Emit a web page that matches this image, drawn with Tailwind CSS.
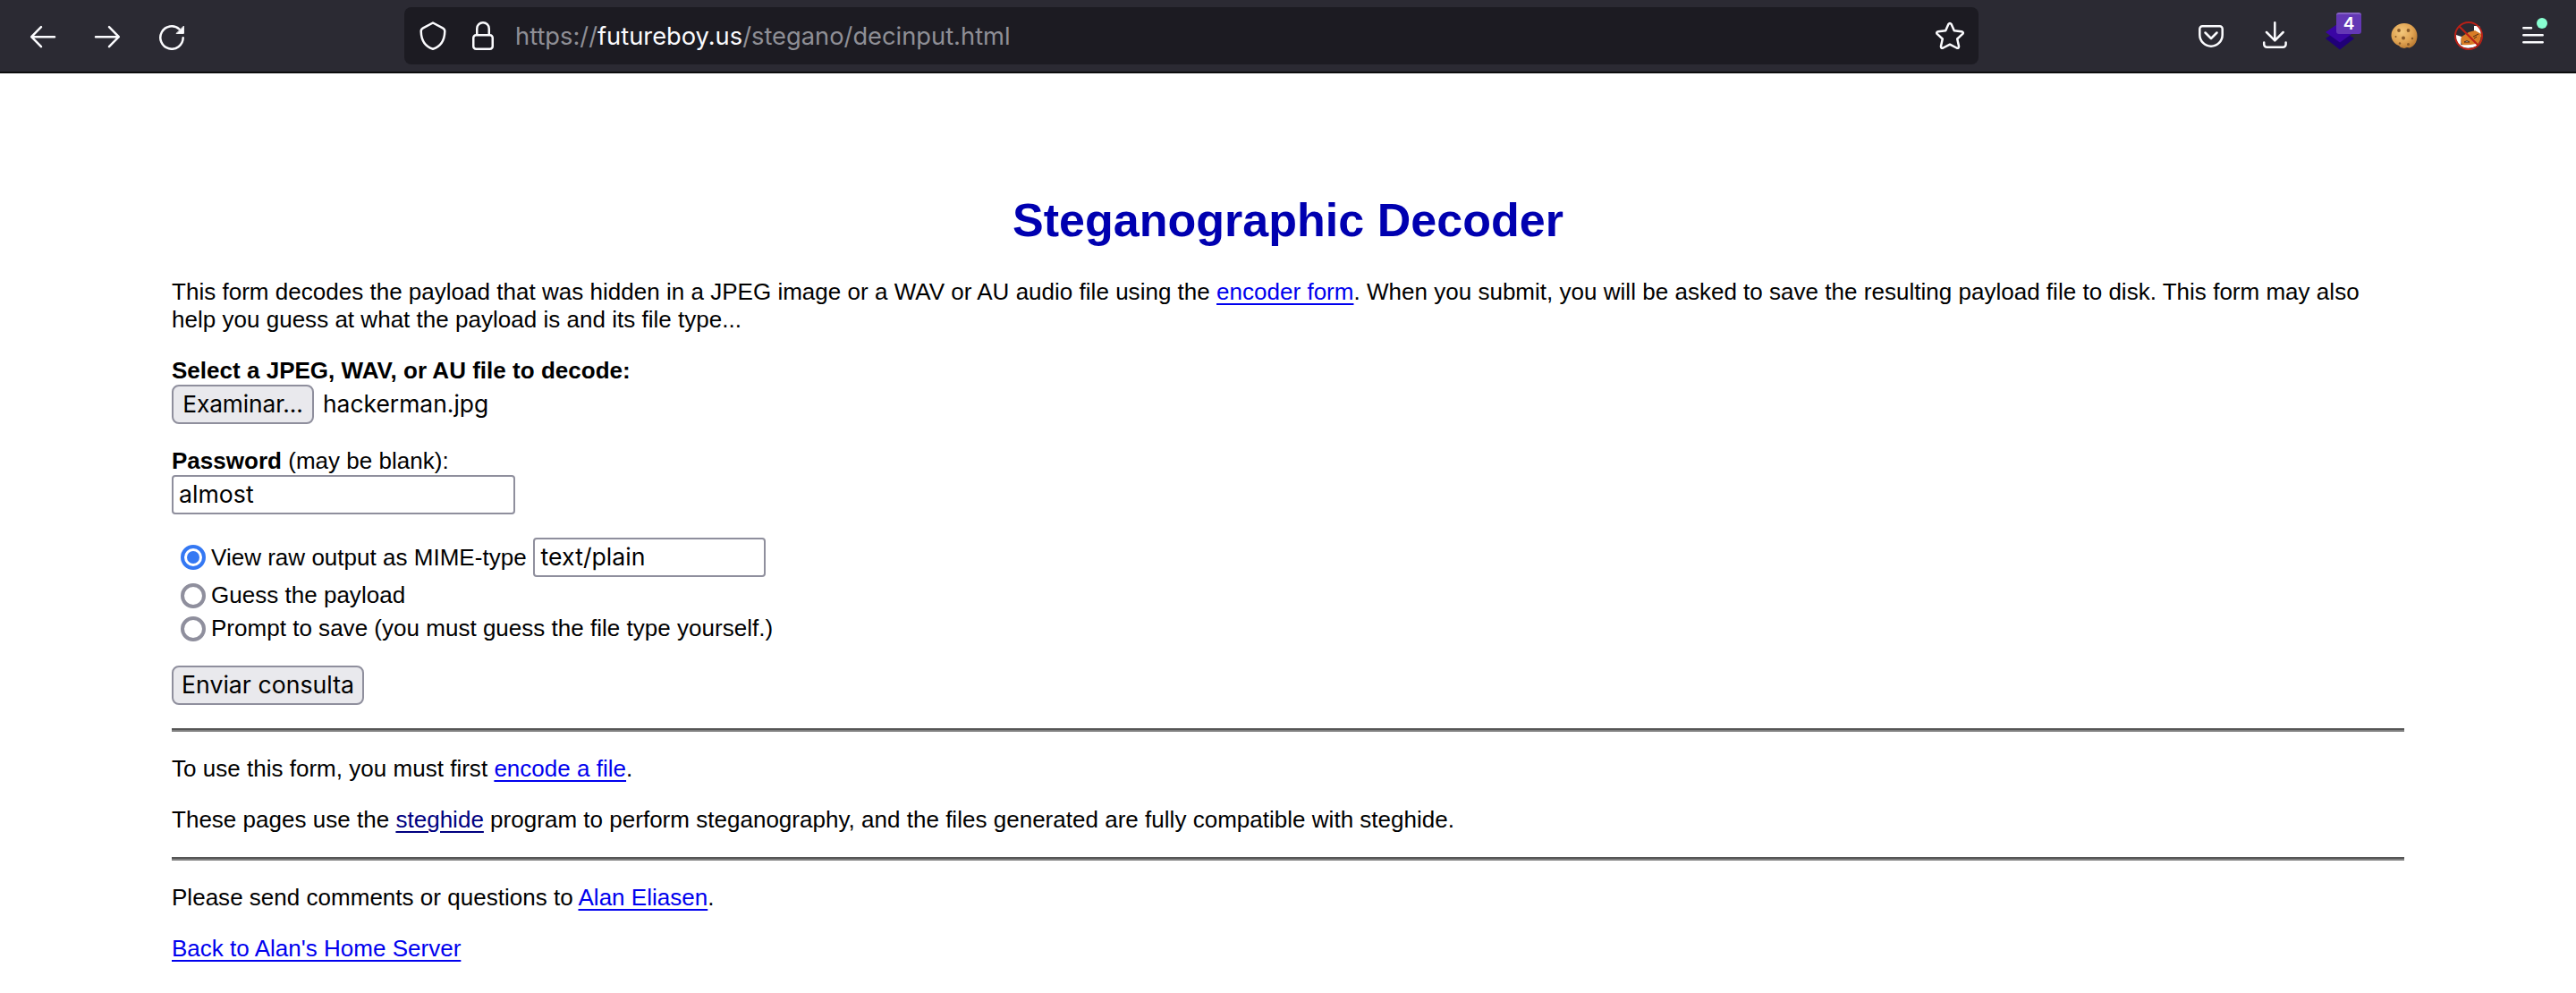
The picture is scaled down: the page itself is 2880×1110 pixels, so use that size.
<!DOCTYPE html>
<html lang="es">
<head>
<meta charset="utf-8">
<title>Steganographic Decoder</title>
<script src="https://cdn.jsdelivr.net/npm/@tailwindcss/browser@4"></script>
</head>
<body class="bg-white text-black">
<header class="flex h-[82px] items-start border-b-2 border-[#0c0c0d] bg-[#2b2a33] text-[#fbfbfe]">
  <nav class="flex h-20 w-[452px] items-center gap-10 pl-8">
    <svg class="size-8" viewBox="0 0 32 32" fill="none" stroke="currentColor" stroke-width="2.5" stroke-linecap="round" stroke-linejoin="round"><path d="M29 17.200H3.200M14 6.200L3.200 17.200L14 28.200"/></svg>
    <svg class="size-8" viewBox="0 0 32 32" fill="none" stroke="currentColor" stroke-width="2.5" stroke-linecap="round" stroke-linejoin="round"><path d="M3 17.200H28.800M18 6.200L28.800 17.200L18 28.200"/></svg>
    <svg class="size-8" viewBox="0 0 32 32" fill="none" stroke="currentColor" stroke-width="2.500" stroke-linecap="round"><path d="M28.700 18.300A12.700 12.700 0 1 1 24.500 8.600"/><path d="M29.400 5.500V13.400H21.500Z" fill="currentColor" stroke-width="1" stroke-linejoin="round"/></svg>
  </nav>
  <div class="mt-2 flex h-16 w-[1760px] items-center rounded-lg bg-[#1c1b22] px-4">
    <svg class="size-8" viewBox="0 0 32 32" fill="none" stroke="currentColor" stroke-width="2.500" stroke-linejoin="round"><path d="M16 1.500L27 7.300Q29.300 8.500 29.300 11C29 21 25 28 16 30.700C7 28 3 21 2.700 11Q2.700 8.500 5 7.300Z"/></svg>
    <svg class="ml-6 size-8" viewBox="0 0 32 32" fill="none" stroke="currentColor" stroke-width="2.500"><rect x="5.250" y="15.250" width="21.500" height="15.500" rx="3"/><path d="M9.250 15V8a6.750 6.750 0 0 1 13.500 0V15"/></svg>
    <div class="ml-5 pt-0.5 whitespace-nowrap font-['Inter',sans-serif] text-[27.3px] leading-8 text-[#8f8f96]">https://<span class="text-[#fbfbfe]">futureboy.us</span>/stegano/decinput.html</div>
    <svg class="ml-auto size-8" viewBox="0 0 32 32" fill="none" stroke="currentColor" stroke-width="2.500" stroke-linejoin="round"><path d="M14.400 3Q16 .8 17.600 3L20.800 10.300L29 11.300Q32 12 30 14.200L24.200 19.500L26 27.500Q26.200 30.500 23.500 29.500L16 25.700L8.500 29.500Q5.800 30.500 6 27.500L7.800 19.500L2 14.200Q0 12 3 11.300L11.200 10.300Z"/></svg>
  </div>
  <div class="ml-auto flex h-20 items-center gap-10 pr-8">
    <svg class="size-8" viewBox="0 0 32 32" fill="none" stroke="currentColor" stroke-width="2.500" stroke-linecap="round" stroke-linejoin="round"><path d="M6.300 5.200H25.700a3 3 0 0 1 3 3V15a12.700 12.700 0 0 1-25.400 0V8.200a3 3 0 0 1 3-3Z"/><path d="M9.500 12.500L16 19L22.500 12.500"/></svg>
    <svg class="size-8" viewBox="0 0 32 32" fill="none" stroke="currentColor" stroke-width="2.500" stroke-linecap="round" stroke-linejoin="round"><path d="M15.300 1.300V20.500M6 12L15.300 21.300L24.600 12M3.200 23.500V25.500a3.200 3.200 0 0 0 3.200 3.200H24.400a3.200 3.200 0 0 0 3.200-3.200V23.500"/></svg>
    <div class="relative size-8">
      <svg class="size-8" viewBox="0 0 32 32"><path d="M0 19L16 31.500L32 19L16 8Z" fill="#200078"/><path d="M0 12L16 23.500L32 12L16 1Z" fill="#3a05a4"/></svg>
      <span class="absolute -top-2.5 left-3 h-6 w-7 rounded-[3px] border-t-2 border-[#8461c4] bg-[#6438b5] text-center font-['Inter',sans-serif] text-[19px] font-semibold leading-[22px] text-white">4</span>
    </div>
    <svg class="size-8" viewBox="0 0 32 32">
      <defs><radialGradient id="dough" cx=".4" cy=".35" r=".7"><stop offset="0" stop-color="#f3c77b"/><stop offset=".6" stop-color="#e0a352"/><stop offset="1" stop-color="#b87830"/></radialGradient></defs>
      <path d="M16 2C24 2 30.500 8 30.500 16C30.500 24 26 28 22 29.500L19 29L16 30L12 29L10 27C5 25 1.500 21 1.500 15.500C1.500 8 8 2 16 2Z" fill="url(#dough)"/>
      <g fill="#8a5a28"><circle cx="10" cy="10" r="1.900"/><circle cx="20.500" cy="10" r="1.900"/><circle cx="15" cy="18.500" r="2"/><circle cx="25" cy="19" r="1.200"/><circle cx="20.500" cy="25.500" r="1.500"/><circle cx="11" cy="24.500" r="1.200"/><circle cx="6.500" cy="17" r="1"/></g>
    </svg>
    <svg class="size-8" viewBox="0 0 32 32">
      <path d="M2 15L8 17L7 29Q1 23 2 15ZM22 5L28 5Q30 10 30 17L22 14Z" fill="#fff"/>
      <path d="M8 17L16 12L23 10L30 14Q30 22 25 27L10 28Q6 23 8 17Z" fill="#d87c26"/>
      <path d="M7 26Q15 27 24 25L26 27Q16 32 7 28Z" fill="#fff"/>
      <path d="M11 23Q14 20 17 23ZM21 17L27 14M22 19L25 17" fill="#fff" stroke="#4e2c14" stroke-width="1"/>
      <circle cx="16" cy="16" r="15" fill="none" stroke="#ba2017" stroke-width="2"/><path d="M5.500 5.500L26.500 26.500" stroke="#ba2017" stroke-width="2.200"/>
    </svg>
    <div class="relative size-8">
      <svg class="size-8" viewBox="0 0 32 32" stroke="currentColor" stroke-width="2.500" stroke-linecap="round"><path d="M5.300 7.200H14M5.300 15.200H26.700M5.300 23.200H26.700"/></svg>
      <span class="absolute -top-1 left-5 size-3 rounded-full bg-[#88ffd1]"></span>
    </div>
  </div>
</header>
<main class="px-48 pt-[134px] font-['Liberation_Sans',Arial,sans-serif] text-[26px] leading-[31px] tracking-[0.018px]">
  <h1 class="mb-[35px] text-center text-[52px] font-bold leading-[60px] text-[#0000b0]">Steganographic Decoder</h1>
  <p>This form decodes the payload that was hidden in a JPEG image or a WAV or AU audio file using the <a class="text-[#0000ee] underline decoration-2 underline-offset-4">encoder form</a>. When you submit, you will be asked to save the resulting payload file to disk. This form may also <br>help you guess at what the payload is and its file type...</p>
  <form class="mt-[26px]">
    <div class="font-bold">Select a JPEG, WAV, or AU file to decode:</div>
    <div class="flex h-11 items-center font-['Inter',sans-serif]">
      <button type="button" class="h-11 w-[159px] rounded-lg border-2 border-[#8f8f9d] bg-[#e9e9ed] pb-0.5 text-[26.3px] tracking-[-0.1px] whitespace-nowrap">Examinar...</button>
      <span class="ml-2.5 pb-0.5 text-[26.4px]">hackerman.jpg</span>
    </div>
    <div class="mt-[26px]"><b>Password</b> (may be blank):</div>
    <div class="flex h-11 w-96 items-center rounded-sm border-2 border-[#8f8f9d] pb-0.5 pl-1.5 font-['Inter',sans-serif] text-[26.667px]">almost</div>
    <div class="mt-[26px] flex h-11 items-center pl-2.5">
      <span class="flex size-7 items-center justify-center rounded-full border-4 border-[#3478f3]"><span class="size-3.5 rounded-full bg-[#3478f3]"></span></span>
      <span class="ml-1.5">View raw output as MIME-type</span>
      <div class="ml-[7px] flex h-11 w-[260px] items-center rounded-sm border-2 border-[#8f8f9d] pb-0.5 pl-[7px] font-['Inter',sans-serif] text-[26.667px]">text/plain</div>
    </div>
    <div class="mt-[5px] flex items-center pl-2.5"><span class="mr-1.5 size-7 rounded-full border-4 border-[#8f8f9d]"></span>Guess the payload</div>
    <div class="mt-1.5 flex items-center pl-2.5"><span class="mr-1.5 size-7 rounded-full border-4 border-[#8f8f9d]"></span>Prompt to save (you must guess the file type yourself.)</div>
    <button type="button" class="mt-[26px] block h-11 w-[215px] rounded-lg border-2 border-[#8f8f9d] bg-[#e9e9ed] pb-0.5 font-['Inter',sans-serif] text-[26.667px] leading-8 whitespace-nowrap">Enviar consulta</button>
  </form>
  <hr class="my-[26px] h-1 border-t-2 border-b-2 border-t-[#555555] border-b-[#808080]">
  <p>To use this form, you must first <a class="text-[#0000ee] underline decoration-2 underline-offset-4">encode a file</a>.</p>
  <p class="mt-[26px]">These pages use the <a class="text-[#000080] underline decoration-2 underline-offset-4">steghide</a> program to perform steganography, and the files generated are fully compatible with steghide.</p>
  <hr class="my-[26px] h-1 border-t-2 border-b-2 border-t-[#555555] border-b-[#808080]">
  <p>Please send comments or questions to <a class="text-[#0000ee] underline decoration-2 underline-offset-4">Alan Eliasen</a>.</p>
  <p class="mt-[26px]"><a class="text-[#0000ee] underline decoration-2 underline-offset-4">Back to Alan's Home Server</a></p>
</main>
</body>
</html>
